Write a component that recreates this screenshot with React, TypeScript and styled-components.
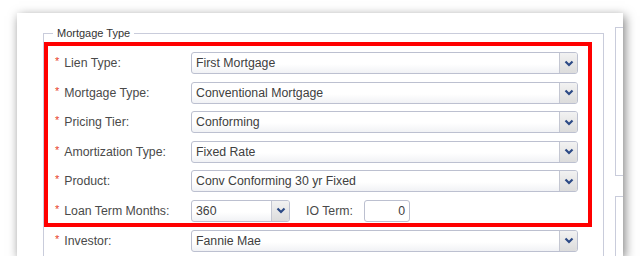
import React from "react";
import styled, { createGlobalStyle } from "styled-components";

const GlobalStyle = createGlobalStyle`
  html, body {
    margin: 0;
    padding: 0;
    background: #ffffff;
  }
  body {
    font-family: "Liberation Sans", Arial, sans-serif;
  }
`;

type Field = { label: string; value: string };

const boxedFields: Field[] = [
  { label: "Lien Type:", value: "First Mortgage" },
  { label: "Mortgage Type:", value: "Conventional Mortgage" },
  { label: "Pricing Tier:", value: "Conforming" },
  { label: "Amortization Type:", value: "Fixed Rate" },
  { label: "Product:", value: "Conv Conforming 30 yr Fixed" },
];

const Chevron = () => (
  <svg width="10" height="7" viewBox="0 0 10 7">
    <path d="M1.5 1.5 L5 5 L8.5 1.5" fill="none" stroke="#2c4a86" strokeWidth="2.2" />
  </svg>
);

const Select = ({ value, width }: { value: string; width?: number }) => (
  <SelectBox $width={width}>
    <SelectText>{value}</SelectText>
    <DropButton>
      <Chevron />
    </DropButton>
  </SelectBox>
);

const App = () => {
  return (
    <>
      <GlobalStyle />
      <Card>
        <Fieldset>
          <Legend>Mortgage Type</Legend>
          {/* highlighted block */}
          <Highlight>
            {boxedFields.map((f) => (
              <Row key={f.label}>
                <Label>
                  <Star>*</Star>
                  {f.label}
                </Label>
                <Select value={f.value} />
              </Row>
            ))}
            <Row $last>
              <Label>
                <Star>*</Star>
                Loan Term Months:
              </Label>
              <Select value="360" width={99} />
              <SubLabel>IO Term:</SubLabel>
              <NumberInput>0</NumberInput>
            </Row>
          </Highlight>
          <Row $outside>
            <Label>
              <Star>*</Star>
              Investor:
            </Label>
            <Select value="Fannie Mae" />
          </Row>
        </Fieldset>
        <SideColumn>
          <SidePanel $height={149} />
          <SidePanel $height={80} />
        </SideColumn>
      </Card>
    </>
  );
};

const Card = styled.div`
  margin: 13px 0 0 17px;
  width: 606px;
  height: 243px;
  background: #ffffff;
  box-shadow: 2px 3px 10px rgba(0, 0, 0, 0.5);
  overflow: hidden;
  display: flex;
  align-items: flex-start;
  box-sizing: border-box;
  padding: 0 0 0 26px;
`;

const Fieldset = styled.fieldset`
  margin: 14px 0 0 0;
  padding: 0 0 20px 0;
  width: 561px;
  flex: none;
  box-sizing: border-box;
  border: 1px solid #c9ccdb;
  min-inline-size: 0;
`;

const Legend = styled.legend`
  margin-left: 9px;
  padding: 0 4px;
  font-size: 11px;
  line-height: 12px;
  color: #333333;
`;

const Highlight = styled.div`
  margin: 3px 11px 0 0;
  border: 4px solid #ff0000;
  padding: 6px 0 0 0;
`;

const Row = styled.div<{ $last?: boolean; $outside?: boolean }>`
  display: flex;
  align-items: center;
  height: 22px;
  margin-bottom: ${(p) => (p.$last ? "1px" : "7.5px")};
  margin-top: ${(p) => (p.$outside ? "3px" : "0")};
  padding-left: ${(p) => (p.$outside ? "11px" : "7px")};
`;

const Label = styled.div`
  width: 136px;
  flex: none;
  font-size: 12.3px;
  color: #4a4a4a;
  white-space: nowrap;
`;

const Star = styled.span`
  color: #e8402a;
  font-size: 11px;
  margin-right: 5px;
  position: relative;
  top: -2px;
`;

const SelectBox = styled.div<{ $width?: number }>`
  width: ${(p) => (p.$width ? `${p.$width}px` : "387px")};
  height: 22px;
  box-sizing: border-box;
  border: 1px solid #bcc0d0;
  border-radius: 3px;
  background: linear-gradient(#ffffff, #ffffff 55%, #f1f2f5);
  display: flex;
  align-items: stretch;
  overflow: hidden;
  flex: none;
`;

const SelectText = styled.div`
  flex: 1;
  padding-left: 4px;
  font-size: 12.3px;
  line-height: 20px;
  color: #404040;
  white-space: nowrap;
  overflow: hidden;
`;

const DropButton = styled.div`
  width: 17px;
  flex: none;
  border-left: 1px solid #c4c7d2;
  background: linear-gradient(#f2f2f2, #dcdcdc);
  display: flex;
  align-items: center;
  justify-content: center;
`;

const SubLabel = styled.div`
  margin-left: 16px;
  font-size: 12.3px;
  color: #4a4a4a;
  width: 58px;
`;

const NumberInput = styled.div`
  width: 46px;
  height: 22px;
  box-sizing: border-box;
  border: 1px solid #bcc0d0;
  border-radius: 3px;
  text-align: right;
  padding-right: 4px;
  font-size: 12.3px;
  line-height: 20px;
  color: #404040;
  background: #ffffff;
`;

const SideColumn = styled.div`
  margin: 14px 0 0 11px;
  display: flex;
  flex-direction: column;
  gap: 20px;
  flex: none;
`;

const SidePanel = styled.div<{ $height: number }>`
  width: 40px;
  height: ${(p) => p.$height}px;
  border: 1px solid #c9ccdb;
  box-sizing: border-box;
`;

export default App;
